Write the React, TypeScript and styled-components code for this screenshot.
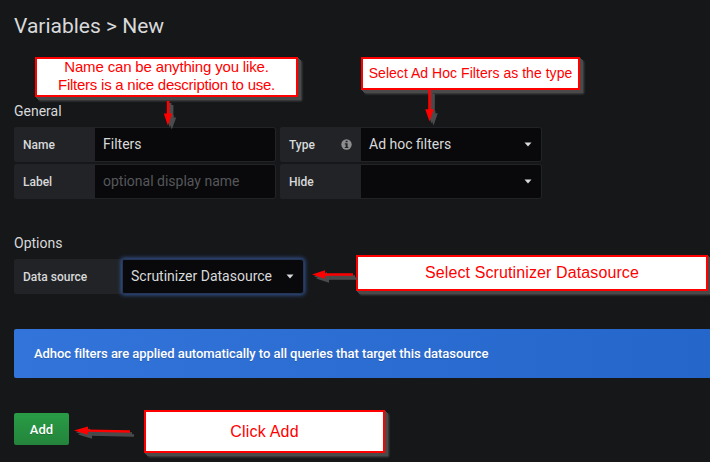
import React from 'react';
import styled, { createGlobalStyle, css } from 'styled-components';

const GlobalStyle = createGlobalStyle`
  *, *::before, *::after { box-sizing: border-box; }
  html, body { margin: 0; background: #161719; overflow: hidden; }
  body { font-family: Roboto, sans-serif; color: #d8d9da; }
`;

const Page = styled.main`
  position: relative;
  width: 710px;
  height: 462px;
  padding: 14px 0 0 14px;
  background: #161719;
  overflow: hidden;
`;

const Title = styled.h1`
  margin: 0;
  font-size: 21px;
  line-height: 24px;
  font-weight: 400;
`;

const Section = styled.section<{ $top: number }>`
  margin-top: ${p => p.$top}px;
`;

const Heading = styled.h2`
  margin: 0 0 7px;
  font-size: 14px;
  line-height: 18px;
  font-weight: 400;
`;

const Rows = styled.div`
  display: flex;
  flex-direction: column;
  gap: 2px;
`;

const Row = styled.div`
  display: flex;
  gap: 4px;
`;

const Field = styled.div`
  display: flex;
  height: 35px;
`;

const Label = styled.label<{ $width?: number }>`
  display: flex;
  align-items: center;
  justify-content: space-between;
  width: ${p => p.$width ?? 81}px;
  padding: 0 8px 0 9px;
  background: #212326;
  border-radius: 2px 0 0 2px;
  font-size: 12px;
  font-weight: 500;
`;

const control = css`
  width: 181px;
  height: 35px;
  padding: 0 8px 2px;
  border: 1px solid #222326;
  border-left: 0;
  border-radius: 0 3px 3px 0;
  background: #09090b;
  color: #d8d9da;
  font: 400 14px Roboto, sans-serif;
  outline: none;
`;

const Input = styled.input`
  ${control}
  &::placeholder { color: #55575a; opacity: 1; }
`;

const SelectBox = styled.div<{ $focused?: boolean }>`
  ${control}
  display: flex;
  align-items: center;
  justify-content: space-between;
  padding-right: 9px;
  ${p => p.$focused && css`
    width: 182px;
    border: 1px solid #243556;
    border-radius: 2px 3px 3px 2px;
    box-shadow: 0 0 4px 1px #34599b;
  `}
`;

const CaretIcon = styled.svg`
  width: 8px;
  height: 5px;
  margin-top: 2px;
`;

const InfoIcon = styled.svg`
  width: 11px;
  height: 11px;
  margin-right: 1px;
`;

const Alert = styled.div`
  display: flex;
  align-items: center;
  height: 49px;
  margin-top: 35px;
  padding-left: 20px;
  border-radius: 2px 0 0 2px;
  background: linear-gradient(90deg, #3274d9, #2566cb);
  color: #fff;
  font-size: 13px;
  letter-spacing: -0.05px;
  font-weight: 500;
  text-shadow: 0 1px 0 rgba(0, 0, 0, 0.2);
`;

const AddButton = styled.button`
  display: block;
  width: 55px;
  height: 32px;
  margin-top: 35px;
  padding: 0;
  border: 0;
  border-radius: 2px;
  background: linear-gradient(#299c46, #23843b);
  color: #fff;
  font: 500 13px Roboto, sans-serif;
  text-shadow: 0 1px 0 rgba(0, 0, 0, 0.2);
`;

const Callout = styled.div<{ $x: number; $y: number; $w: number; $h: number; $size: number }>`
  position: absolute;
  left: ${p => p.$x}px;
  top: ${p => p.$y}px;
  width: ${p => p.$w}px;
  height: ${p => p.$h}px;
  display: flex;
  flex-direction: column;
  align-items: center;
  justify-content: center;
  border: 2px solid #f00;
  background: #fff;
  color: #f00;
  font: ${p => p.$size}px/18px "Liberation Sans", Arial, sans-serif;
  white-space: nowrap;
  box-shadow: 1px 1px 0 #4a4a4b, 2px 2px 0 #4a4a4b, 3px 3px 0 #4a4a4b, 4px 4px 2px #474748;
`;

const CalloutText = styled.span<{ $spacing?: number; $lift?: number }>`
  letter-spacing: ${p => p.$spacing ?? 0}px;
  transform: translateY(${p => -(p.$lift ?? 0)}px);
`;

const Arrows = styled.svg`
  position: absolute;
  inset: 0;
  width: 710px;
  height: 462px;
  pointer-events: none;
`;

const arrowPaths = [
  'M166.8 101H169.4V113.5H172.2L167.8 125.5L163.8 113.5H166.8Z',
  'M428.2 90H430.8V109.2H433.8L429.5 121.5L425.2 109.2H428.2Z',
  'M312 274.5L325 270.3V273.3H353V275.8H325V278.8Z',
  'M74 430.5L88 426.5V429.5L130 430.3V432.8L88 431.8V434.8Z',
];

const Caret = () => (
  <CaretIcon viewBox="0 0 8 5"><path d="M.5.5h7L4 4.5z" fill="#d8d9da" /></CaretIcon>
);

const Info = () => (
  <InfoIcon viewBox="0 0 11 11">
    <circle cx="5.5" cy="5.5" r="5.2" fill="#8e8e90" />
    <path d="M4.6 1.7h2v1.6h-2zM3.8 4.2h2.8v3.7h.8v1.2H3.8V7.9h.9V5.4h-.9z" fill="#212326" />
  </InfoIcon>
);

export default function App() {
  return (
    <Page>
      <GlobalStyle />
      <Title>Variables &gt; New</Title>
      <Section $top={64}>
        <Heading>General</Heading>
        <Rows>
          <Row>
            <Field><Label>Name</Label><Input defaultValue="Filters" /></Field>
            <Field><Label>Type<Info /></Label><SelectBox>Ad hoc filters<Caret /></SelectBox></Field>
          </Row>
          <Row>
            <Field><Label>Label</Label><Input placeholder="optional display name" /></Field>
            <Field><Label>Hide</Label><SelectBox><span /><Caret /></SelectBox></Field>
          </Row>
        </Rows>
      </Section>
      <Section $top={35}>
        <Heading>Options</Heading>
        <Field>
          <Label $width={108}>Data source</Label>
          <SelectBox $focused>Scrutinizer Datasource<Caret /></SelectBox>
        </Field>
      </Section>
      <Alert>Adhoc filters are applied automatically to all queries that target this datasource</Alert>
      <AddButton>Add</AddButton>

      <Callout $x={35} $y={57} $w={263} $h={40} $size={15}>
        <CalloutText $spacing={-0.16} $lift={1}>Name can be anything you like.</CalloutText>
        <CalloutText $spacing={-0.24} $lift={1}>Filters is a nice description to use.</CalloutText>
      </Callout>
      <Callout $x={361} $y={57} $w={219} $h={33} $size={14}>
        <CalloutText $spacing={0.04} $lift={1}>Select Ad Hoc Filters as the type</CalloutText>
      </Callout>
      <Callout $x={356} $y={255} $w={352} $h={36} $size={16}>
        <CalloutText $spacing={0.11}>Select Scrutinizer Datasource</CalloutText>
      </Callout>
      <Callout $x={144} $y={410} $w={241} $h={43} $size={16}>
        <CalloutText $spacing={0.2}>Click Add</CalloutText>
      </Callout>
      <Arrows viewBox="0 0 710 462">
        <defs>
          <filter id="soft" x="-50%" y="-50%" width="200%" height="200%">
            <feGaussianBlur stdDeviation="0.6" />
          </filter>
        </defs>
        {arrowPaths.map(d => (
          <React.Fragment key={d}>
            <g fill="#4c4c4d" filter="url(#soft)">
              <path d={d} transform="translate(2 2)" />
              <path d={d} transform="translate(4 4)" />
            </g>
            <path d={d} fill="#f00" />
          </React.Fragment>
        ))}
      </Arrows>
    </Page>
  );
}
